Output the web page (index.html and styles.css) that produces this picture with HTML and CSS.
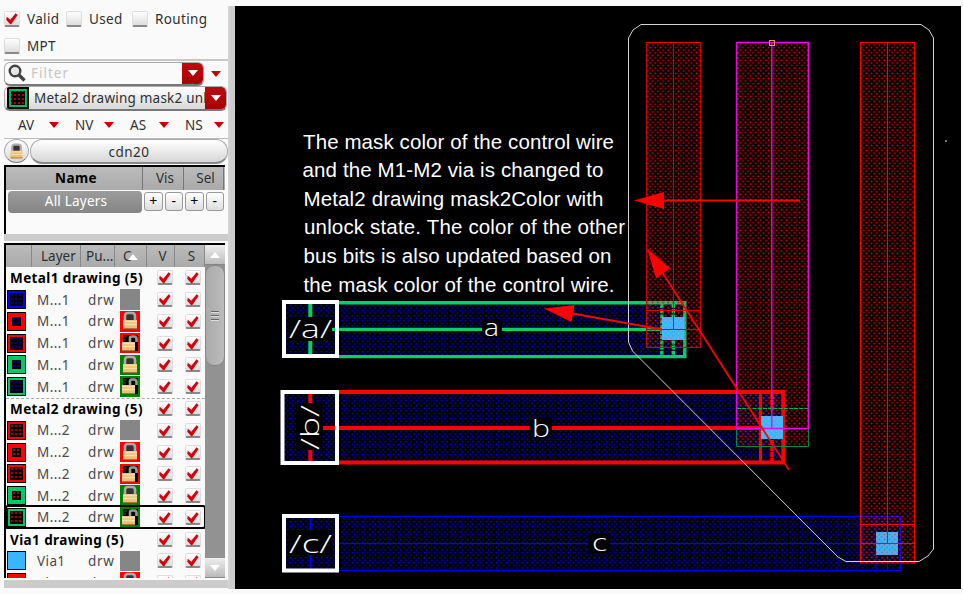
FILE: index.html
```
<!DOCTYPE html>
<html lang="en">
<head>
<meta charset="utf-8">
<title>Layout palette</title>
<link rel="stylesheet" href="styles.css">
</head>
<body>
<svg class="defs" width="0" height="0" aria-hidden="true">
  <defs>
    <symbol id="tick" viewBox="0 0 16 17">
      <path d="M2.8 6.8 6.3 9.8 11.6 3.3 13.6 5 7.2 14.2H6.2L2.2 9.8Z" fill="#d8000c"/>
    </symbol>
    <symbol id="lock" viewBox="0 0 20 20">
      <path d="M5 10V5Q5 2 8 2H12Q15 2 15 5V10" fill="#333" stroke="#aaa" stroke-width="2.6"/>
      <rect x="3" y="9" width="14" height="9" fill="#e8c07a"/>
      <path d="M3 10.5H17M3 13.5H17" stroke="#f9dda8" stroke-width="1.4"/>
      <path d="M3 17.6H17" stroke="#9d7030"/>
    </symbol>
    <symbol id="unlock" viewBox="0 0 20 20">
      <path d="M3 2H18V18H3Z" fill="#000"/>
      <path d="M10 9V5Q10 3.5 12 3.5H14Q16.5 3.5 16.5 6V9" fill="none" stroke="#999" stroke-width="2.6"/>
      <path d="M4 4H7M4 7H6" stroke="currentColor" stroke-width="1.2"/>
      <rect x="2" y="9" width="13" height="9" fill="#e8c07a"/>
      <path d="M2 10.5H15M2 13.5H15" stroke="#f9dda8" stroke-width="1.4"/>
      <path d="M2 17.6H15" stroke="#9d7030"/>
    </symbol>
  </defs>
</svg>
<div class="app">
  <aside class="palette">
    <div class="checks">
      <label class="check w1"><span class="box"><svg class="tick"><use href="#tick"/></svg></span>Valid</label>
      <label class="check w2"><span class="box"></span>Used</label>
      <label class="check w3"><span class="box"></span>Routing</label>
      <label class="check w4"><span class="box"></span>MPT</label>
    </div>
    <div class="filter-row">
      <div class="filter">
        <svg class="lens" viewBox="0 0 20 20"><circle cx="8" cy="8" r="5.3" fill="#e4e8ea" stroke="#444" stroke-width="2.4"/><path d="M12 12 17.5 17.5" stroke="#444" stroke-width="3.4"/></svg>
        <span class="hint">Filter</span>
        <span class="drop"><i class="tri white"></i></span>
      </div>
      <i class="tri red"></i>
    </div>
    <div class="current">
      <span class="chip"></span>
      <span class="current-name">Metal2 drawing mask2 unl</span>
      <span class="drop"><i class="tri white"></i></span>
    </div>
    <div class="modes">
      <span>AV</span><i class="tri red"></i><span>NV</span><i class="tri red"></i><span>AS</span><i class="tri red"></i><span>NS</span><i class="tri red"></i>
    </div>
    <div class="tech">
      <span class="tech-lock"><svg viewBox="0 0 20 20"><use href="#lock"/></svg></span>
      <span class="tech-name">cdn20</span>
    </div>
    <div class="sets">
      <div class="sets-head"><b>Name</b><span>Vis</span><span>Sel</span></div>
      <div class="sets-row"><span class="all">All Layers</span><span class="pm">+</span><span class="pm">-</span><span class="pm">+</span><span class="pm">-</span></div>
    </div>
    <div class="splitter"></div>
    <div class="layers">
      <div class="table">
        <div class="head"><span></span><span class="h-layer">Layer</span><span>Pu...</span><span class="h-color">C<i class="tri up"></i></span><span class="h-mid">V</span><span class="h-mid">S</span></div>
        <div class="rows" id="rows"></div>
      </div>
      <div class="scroll"><span class="arrow"><i class="tri up"></i></span><span class="thumb"><i></i><i></i><i></i></span><span class="arrow down"><i class="tri white"></i></span></div>
    </div>
    <div class="footer"></div>
  </aside>
  <div class="divider"></div>
  <main class="canvas">
    <svg width="726" height="583" viewBox="235 6 726 583">
      <defs>
        <pattern id="rd" width="5.15" height="5.15" patternUnits="userSpaceOnUse"><rect width="1.55" height="1.55" x=".5" y=".5" fill="#f00"/><rect width="1.55" height="1.55" x="3.05" y="3.05" fill="#f00"/></pattern>
        <pattern id="bd" width="5.15" height="5.15" patternUnits="userSpaceOnUse"><rect width="1.6" height="1.6" x="1.3" y=".7" fill="#00f"/><rect width="1.5" height="1.5" x="3.5" y="3.3" fill="#00f"/></pattern>
        <pattern id="vd" width="5.15" height="5.15" patternUnits="userSpaceOnUse"><rect width="5.15" height="5.15" fill="#36b8ff"/><rect width="1.4" height="1.4" x=".6" y=".6" fill="#b0a0c8"/><rect width="1.4" height="1.4" x="3.2" y="3.2" fill="#b0a0c8"/></pattern>
        <pattern id="vr" width="5.15" height="5.15" patternUnits="userSpaceOnUse"><rect width="5.15" height="5.15" fill="#36b8ff"/><rect width="1.4" height="1.4" x=".6" y=".6" fill="#e04050"/><rect width="1.4" height="1.4" x="3.2" y="3.2" fill="#e04050"/></pattern>
      </defs>

      <!-- horizontal wires -->
      <rect x="284" y="302" width="401" height="55" fill="url(#bd)"/>
      <rect x="284" y="392" width="499" height="71" fill="url(#bd)"/>
      <rect x="284" y="516" width="617" height="54" fill="url(#bd)"/>
      <g fill="none" stroke="#00d068" stroke-width="3.4">
        <path d="M339 302.7H684.8V356.6H339M332 329.4H671"/>
        <path d="M661.8 304V355M673.3 304V355" stroke-dasharray="4 1.2"/>
        <path d="M310.3 304V317M310.3 341V355" stroke-width="4"/>
      </g>
      <g fill="none" stroke="#f00" stroke-width="4">
        <path d="M339 392H783.3V462.6H339M323 428H771"/>
        <path d="M760.5 394V461" stroke-width="3"/><path d="M772 394V410M772 440V461" stroke-width="3.5" stroke-dasharray="5 1"/>
        <path d="M310.3 394V403M310.3 450V461"/>
      </g>
      <g fill="none" stroke="#00f">
        <path d="M339 516.5H900.5V570.5H339M339 543.5H887M876 517V570M887.5 517V570" />
        <path d="M310.5 517V530M310.5 555V570"/>
      </g>

      <!-- vertical wires -->
      <rect x="647" y="43" width="53" height="304" fill="url(#rd)"/>
      <rect x="737" y="43" width="71" height="403" fill="url(#rd)"/>
      <rect x="861" y="43" width="53" height="520" fill="url(#rd)"/>

      <rect x="662" y="317" width="22.5" height="23" fill="url(#vd)"/>
      <rect x="761" y="416" width="22" height="23" fill="url(#vd)"/>
      <rect x="876" y="532" width="22" height="23" fill="url(#vr)"/>

      <g fill="none" stroke="#d00000">
        <rect x="646.5" y="42.5" width="54" height="305"/>
        <path d="M646.5 310.5H700M646.5 329.5H700M673.5 43V329"/>
      </g>
      <path d="M646.5 42.5H700" stroke="#f00"/>
      <g fill="none" stroke="#f00">
        <rect x="860.5" y="42.5" width="54" height="520.5"/>
        <path d="M860 524.5H914M860 543.5H914M887.5 43V543"/>
      </g>
      <path d="M736.5 408V446.5H808.5V408" fill="none" stroke="#008a45"/>
      <path d="M737 408.5H808" stroke="#00b85c" stroke-dasharray="4 1.2"/>
      <path d="M736.5 428.5V42.5H808.3V428.5ZM771.8 43V428" fill="none" stroke="#f000f0" stroke-width="1.4"/>
      <rect x="769.5" y="40.5" width="5" height="5" fill="none" stroke="#d9a83c"/>

      <!-- pin boxes -->
      <g fill="none" stroke="#fff" stroke-width="4">
        <rect x="284" y="302" width="53" height="54"/>
        <rect x="282.5" y="392" width="54.5" height="71"/>
        <rect x="284" y="516" width="53" height="54.5"/>
      </g>
      <g fill="#000">
        <rect x="288" y="317" width="44" height="24"/>
        <rect x="296" y="403" width="27" height="47"/>
        <rect x="288" y="530" width="44" height="25"/>
        <rect x="482" y="320" width="20" height="18"/>
        <rect x="529" y="418" width="23" height="20"/>
        <rect x="588" y="534" width="22" height="19"/>
      </g>
      <g class="net">
        <text class="pin" x="289" y="338" textLength="43" lengthAdjust="spacingAndGlyphs">/a/</text>
        <text class="pin" x="289" y="552.5" textLength="43" lengthAdjust="spacingAndGlyphs">/c/</text>
        <text class="pin" transform="translate(319 450) rotate(-90)" textLength="45" lengthAdjust="spacingAndGlyphs">/b/</text>
        <text x="484" y="336" textLength="15" lengthAdjust="spacingAndGlyphs">a</text>
        <text x="532" y="437" textLength="18" lengthAdjust="spacingAndGlyphs">b</text>
        <text x="592" y="551" textLength="15" lengthAdjust="spacingAndGlyphs">c</text>
      </g>

      <!-- bus outline -->
      <path d="M628.5 38 633 30 641 24.5H921L929 30 933.5 38V549L928 556 919 561.5H846L838 557 632.5 351 628.5 342Z" fill="none" stroke="#d4d4d4"/>
      <rect x="945" y="140" width="2" height="2" fill="#777"/>

      <!-- callouts -->
      <g stroke="#f00" stroke-width="1.8">
        <path d="M660 200.5H800M662 272 789 470M572 313.5 662 329.5"/>
      </g>
      <g fill="#f00">
        <path d="M634 200.5 664 192V209Z"/>
        <path d="M647 248 670 268.5 656 278.5Z"/>
        <path d="M544 308.5 574.5 305 571.5 322Z"/>
      </g>
      <g class="note">
        <text x="303" y="148.5" textLength="311">The mask color of the control wire</text>
        <text x="302.5" y="177" textLength="301">and the M1-M2 via is changed to</text>
        <text x="303.5" y="205.5" textLength="300">Metal2 drawing mask2Color with</text>
        <text x="304" y="234" textLength="321">unlock state. The color of the other</text>
        <text x="303.5" y="262.5" textLength="308">bus bits is also updated based on</text>
        <text x="303.5" y="291.5" textLength="311">the mask color of the control wire.</text>
      </g>
    </svg>
  </main>
</div>
<script src="palette.js"></script>
</body>
</html>
```
FILE: styles.css
```
* { box-sizing: border-box; }
body { margin: 0; background: #fafafa; overflow: hidden; font-family: "Noto Sans", "Open Sans", sans-serif; font-size: 13.5px; color: #303030; }
.defs { display: block; }
.app { display: flex; width: 961px; height: 589px; }
.palette { width: 228px; padding-left: 4px; display: flex; flex-direction: column; background: #fafafa; flex: none; }
.divider { width: 7px; margin-top: 6px; flex: none; background: linear-gradient(90deg, #d9d4db, #ccc 40%, #ccc); }
.canvas { width: 726px; height: 583px; margin-top: 6px; background: #000; }
.canvas svg { display: block; }

.checks { height: 59px; padding-top: 6px; display: flex; flex-wrap: wrap; align-content: flex-start; }
.check { display: flex; align-items: center; height: 26.5px; letter-spacing: .35px; gap: 7px; white-space: nowrap; }
.w1 { width: 62px; }
.w2 { width: 66px; }
.w3 { width: 90px; }
.w4 { width: 200px; }
.box { width: 16px; height: 16px; flex: none; border-radius: 2px; background: linear-gradient(#fff, #ddd); border: 1px solid #ddd; border-bottom: 2px solid #888; }
.tick { display: block; width: 16px; height: 17px; margin: -2px 0 0 -1px; overflow: visible; }

.tri { display: block; width: 0; height: 0; border: 5px solid transparent; border-bottom: 0; border-top: 6px solid #c80000; flex: none; }
.tri.white { border-top-color: #fff; }
.tri.up { border-top: 0; border-bottom: 6px solid #fff; }
.filter-row { height: 27px; border-top: 2px solid #c8c8c8; display: flex; align-items: center; gap: 7px; }
.filter { width: 200px; height: 24px; border: 1px solid #aaa; border-bottom: 2px solid #777; border-radius: 6px; display: flex; align-items: center; background: #fafafa; overflow: hidden; }
.lens { width: 20px; height: 20px; margin-left: 2px; }
.hint { flex: 1; padding-left: 4px; color: #c6c6c6; letter-spacing: 1px; }
.drop { width: 21px; height: 24px; flex: none; background: linear-gradient(#bd0c10, #a80004); display: flex; align-items: center; justify-content: center; border-radius: 0 5px 5px 0; }
.current { height: 25px; border: 1px solid #aaa; border-bottom: 2px solid #777; border-radius: 6px; background: linear-gradient(#fff, #d8d8d8); display: flex; align-items: center; overflow: hidden; margin-right: 1px; }
.chip { width: 22px; height: 22px; margin-left: 2px; border: 2px solid #000; outline: 2px solid #00b860; outline-offset: -4px; flex: none; background: radial-gradient(#f00 20%, #000 36%) 0 0 / 4px 4px; }
.current-name { flex: 1; width: 0; overflow: hidden; padding-left: 5px; white-space: nowrap; letter-spacing: .22px; }
.modes { height: 27px; display: grid; grid-template-columns: 44px 13px 43px 12px 43px 12px 43px 12px; align-items: center; }
.modes span { padding-left: 14px; }
.modes .red { justify-self: center; margin-left: -2px; }
.tech { height: 26px; border-top: 1px solid #bbb; display: flex; gap: 1px; }
.tech-lock { width: 25px; height: 24px; border-radius: 50%; border: 1px solid #aaa; border-bottom-color: #777; background: linear-gradient(#fff, #d8d8d8); padding: 3px; }
.tech-lock svg { display: block; width: 17px; height: 17px; }
.tech-name { flex: 1; height: 25px; border: 1px solid #aaa; border-bottom: 2px solid #888; border-radius: 12px; background: linear-gradient(#fff, #d6d6d6); text-align: center; line-height: 25px; letter-spacing: .5px; }

.sets { height: 69px; margin-top: 1px; margin-right: 3px; border-top: 2px solid #000; border-left: 2px solid #000; }
.sets-head { height: 23px; background: linear-gradient(#bbb, #aaa); display: grid; grid-template-columns: 137px 41px 40px; line-height: 22px; text-align: center; }
.sets-head b { color: #000; letter-spacing: .4px; padding-left: 4px; }
.sets-head > * { border-right: 1px solid #777; }
.sets-head span { padding-left: 4px; }
.sets-row { padding: 1px 0 0 2px; display: flex; gap: 2px; }
.all { width: 134px; height: 22px; background: linear-gradient(#9c9c9c, #858585); border-radius: 4px; color: #fff; text-align: center; line-height: 21px; letter-spacing: .2px; padding-left: 2px; }
.pm { width: 18.5px; height: 19px; margin-top: 1px; border: 1px solid #999; border-radius: 3px; text-align: center; line-height: 16px; background: linear-gradient(#fff, #ddd); color: #000; font-size: 14px; }
.splitter { height: 7px; margin-bottom: 2px; background: #ccc; }

.layers { height: 335px; margin-right: 3px; border-top: 2px solid #000; border-left: 2px solid #000; display: flex; overflow: hidden; flex: none; }
.table { width: 199px; overflow: hidden; }
.head { height: 22px; background: linear-gradient(#bbb, #aaa); display: grid; grid-template-columns: 26px 49px 34px 32px 28px 30px; line-height: 22px; }
.head span { border-right: 1px solid #888; padding-left: 5px; }
.head .h-layer { padding-left: 9px; }
.head .h-color { padding-left: 8px; display: flex; align-items: center; }
.h-color .tri { margin-left: -4px; margin-top: 2px; }
.head .h-mid { text-align: center; padding-left: 4px; }
.row { height: 21.77px; display: grid; grid-template-columns: 31px 51px 32px 37px 28px 20px; align-items: center; white-space: nowrap; color: #4a4a4a; letter-spacing: .4px; }
.row.group { grid-template-columns: 151px 28px 20px; font-weight: 700; color: #000; letter-spacing: .4px; }
.row.group .title { padding-left: 4px; }
.row.edge { border-top: 1px dashed #aaa; }
.row.current-row { outline: 2px solid #000; outline-offset: -1px; border-radius: 2px; }
.row > .purpose { letter-spacing: .7px; }
.swatch { width: 19px; height: 19px; margin-left: 1px; border: 1px solid #000; display: flex; align-items: center; justify-content: center; }
.fill { width: 13px; height: 13px; background-color: #000; background-size: 4px 4px; }
.fill.blue { background-image: radial-gradient(#00f 15%, transparent 38%); }
.fill.red { background-image: radial-gradient(#f00 18%, transparent 38%); }
.fill.small { width: 9px; height: 9px; }
.state { width: 20px; height: 20.5px; display: block; background: #868686; }
.state svg { display: block; width: 20px; height: 20px; }
.row .box { height: 15px; }

.scroll { width: 20px; display: flex; flex-direction: column; background: #929292; }
.arrow { height: 20px; background: linear-gradient(#eee, #bbb); display: flex; align-items: center; justify-content: center; border-bottom: 1px solid #888; flex: none; }
.arrow.down { margin-top: auto; }
.thumb { height: 101px; background: linear-gradient(90deg, #aaa, #bbb); border: 1px solid #888; border-radius: 9px; display: flex; flex-direction: column; gap: 2px; justify-content: center; align-items: center; }
.thumb i { width: 8px; height: 2px; border-top: 1px solid #666; background: #ddd; }
.footer { height: 8px; margin-top: 2px; background: #ccc; }

.net text { font-family: "Open Sans", sans-serif; font-weight: 300; font-size: 23px; fill: #fff; }
.net .pin { font-size: 26px; }
.note text { font-family: "Liberation Sans", Arial, sans-serif; font-size: 20.5px; fill: #fff; }
```
FILE: palette.js
```
// Each entry: title, or [layer, border colour, fill, small?, lock state, lock background]
const R = '#f00', G = '#00c864', B = '#00f', K = '#008000';
const rows = [
  'Metal1 drawing (5)',
  ['M...1', B, 'blue', 0, '', ''],
  ['M...1', R, 'blue', 1, 'lock', R],
  ['M...1', R, 'blue', 0, 'unlock', R],
  ['M...1', G, 'blue', 1, 'lock', K],
  ['M...1', G, 'blue', 0, 'unlock', K],
  'Metal2 drawing (5)',
  ['M...2', R, 'red', 0, '', ''],
  ['M...2', R, 'red', 1, 'lock', R],
  ['M...2', R, 'red', 0, 'unlock', R],
  ['M...2', G, 'red', 1, 'lock', K],
  ['M...2', G, 'red', 0, 'unlock', K, 1],
  'Via1 drawing (5)',
  ['Via1', '#38b6ff', 'none', 0, '', ''],
  ['Via1', R, 'none', 0, 'lock', R]
];
const box = '<span class="box"><svg class="tick"><use href="#tick"/></svg></span>';
document.getElementById('rows').innerHTML = rows.map((r, i) => {
  if (typeof r === 'string') {
    return `<div class="row group${i ? ' edge' : ''}"><span class="title">${r}</span>${box}${box}</div>`;
  }
  const [name, edge, fill, small, lock, bg, current] = r;
  const inner = fill === 'none' ? '' : `<i class="fill ${fill}${small ? ' small' : ''}"></i>`;
  const icon = lock ? `<svg viewBox="0 0 20 20"><use href="#${lock}"/></svg>` : '';
  return `<div class="row${current ? ' current-row' : ''}"><span class="swatch" style="background:${edge}">${inner}</span><span>${name}</span><span class="purpose">drw</span><span class="state" style="background:${bg}">${icon}</span>${box}${box}</div>`;
}).join('');
```
